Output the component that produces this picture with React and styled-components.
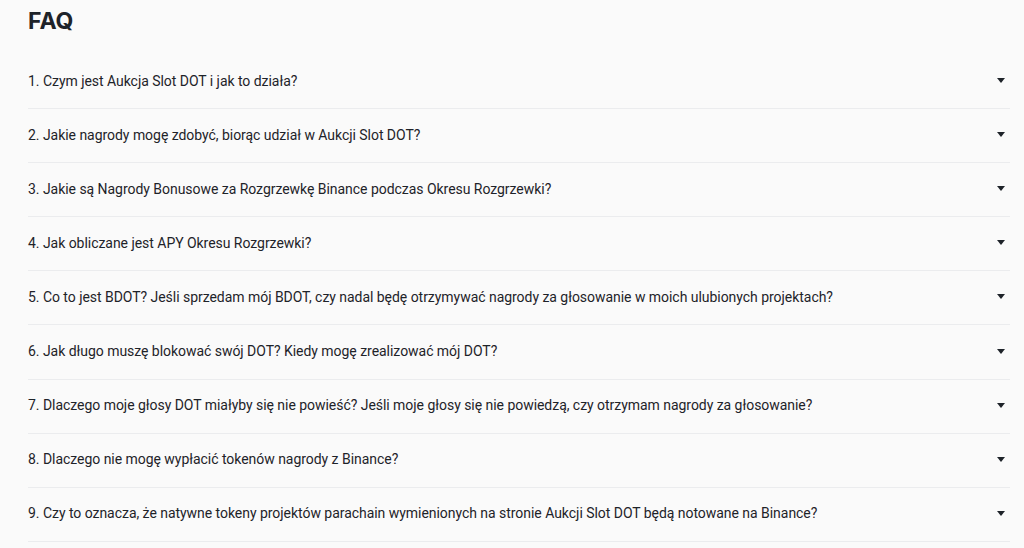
import styled, { createGlobalStyle } from "styled-components";

const GlobalStyle = createGlobalStyle`
  body {
    margin: 0;
    background: #fafafa;
    font-family: Roboto, "Noto Sans", sans-serif;
    color: #1e2329;
  }
`;

const StyledPage = styled.main`
  padding: 0 14px 0 28px;
  height: 548px;
  overflow: hidden;
`;

const StyledTitle = styled.h2`
  margin: 0;
  height: 55px;
  padding-top: 6px;
  box-sizing: border-box;
  font-family: Inter, sans-serif;
  font-size: 23px;
  font-weight: 700;
  line-height: 30px;
`;

const StyledList = styled.ul`
  list-style: none;
  margin: 0;
  padding: 0;
`;

const StyledItem = styled.li`
  display: flex;
  align-items: center;
  justify-content: space-between;
  height: 54.1px;
  padding-bottom: 2px;
  box-sizing: border-box;
  border-bottom: 1px solid #ebecee;
  font-size: 14px;
  letter-spacing: -0.04px;
`;

const StyledArrow = styled.span`
  width: 0;
  height: 0;
  margin-right: 5px;
  border-left: 4.5px solid transparent;
  border-right: 4.5px solid transparent;
  border-top: 5px solid #1e2329;
`;

const questions = [
  "Czym jest Aukcja Slot DOT i jak to działa?",
  "Jakie nagrody mogę zdobyć, biorąc udział w Aukcji Slot DOT?",
  "Jakie są Nagrody Bonusowe za Rozgrzewkę Binance podczas Okresu Rozgrzewki?",
  "Jak obliczane jest APY Okresu Rozgrzewki?",
  "Co to jest BDOT? Jeśli sprzedam mój BDOT, czy nadal będę otrzymywać nagrody za głosowanie w moich ulubionych projektach?",
  "Jak długo muszę blokować swój DOT? Kiedy mogę zrealizować mój DOT?",
  "Dlaczego moje głosy DOT miałyby się nie powieść? Jeśli moje głosy się nie powiedzą, czy otrzymam nagrody za głosowanie?",
  "Dlaczego nie mogę wypłacić tokenów nagrody z Binance?",
  "Czy to oznacza, że natywne tokeny projektów parachain wymienionych na stronie Aukcji Slot DOT będą notowane na Binance?",
];

export default function App() {
  return (
    <>
      <GlobalStyle />
      <StyledPage>
        <StyledTitle>FAQ</StyledTitle>
        <StyledList>
          {questions.map((question, index) => (
            <StyledItem key={question}>
              <span>{`${index + 1}. ${question}`}</span>
              <StyledArrow />
            </StyledItem>
          ))}
        </StyledList>
      </StyledPage>
    </>
  );
}
